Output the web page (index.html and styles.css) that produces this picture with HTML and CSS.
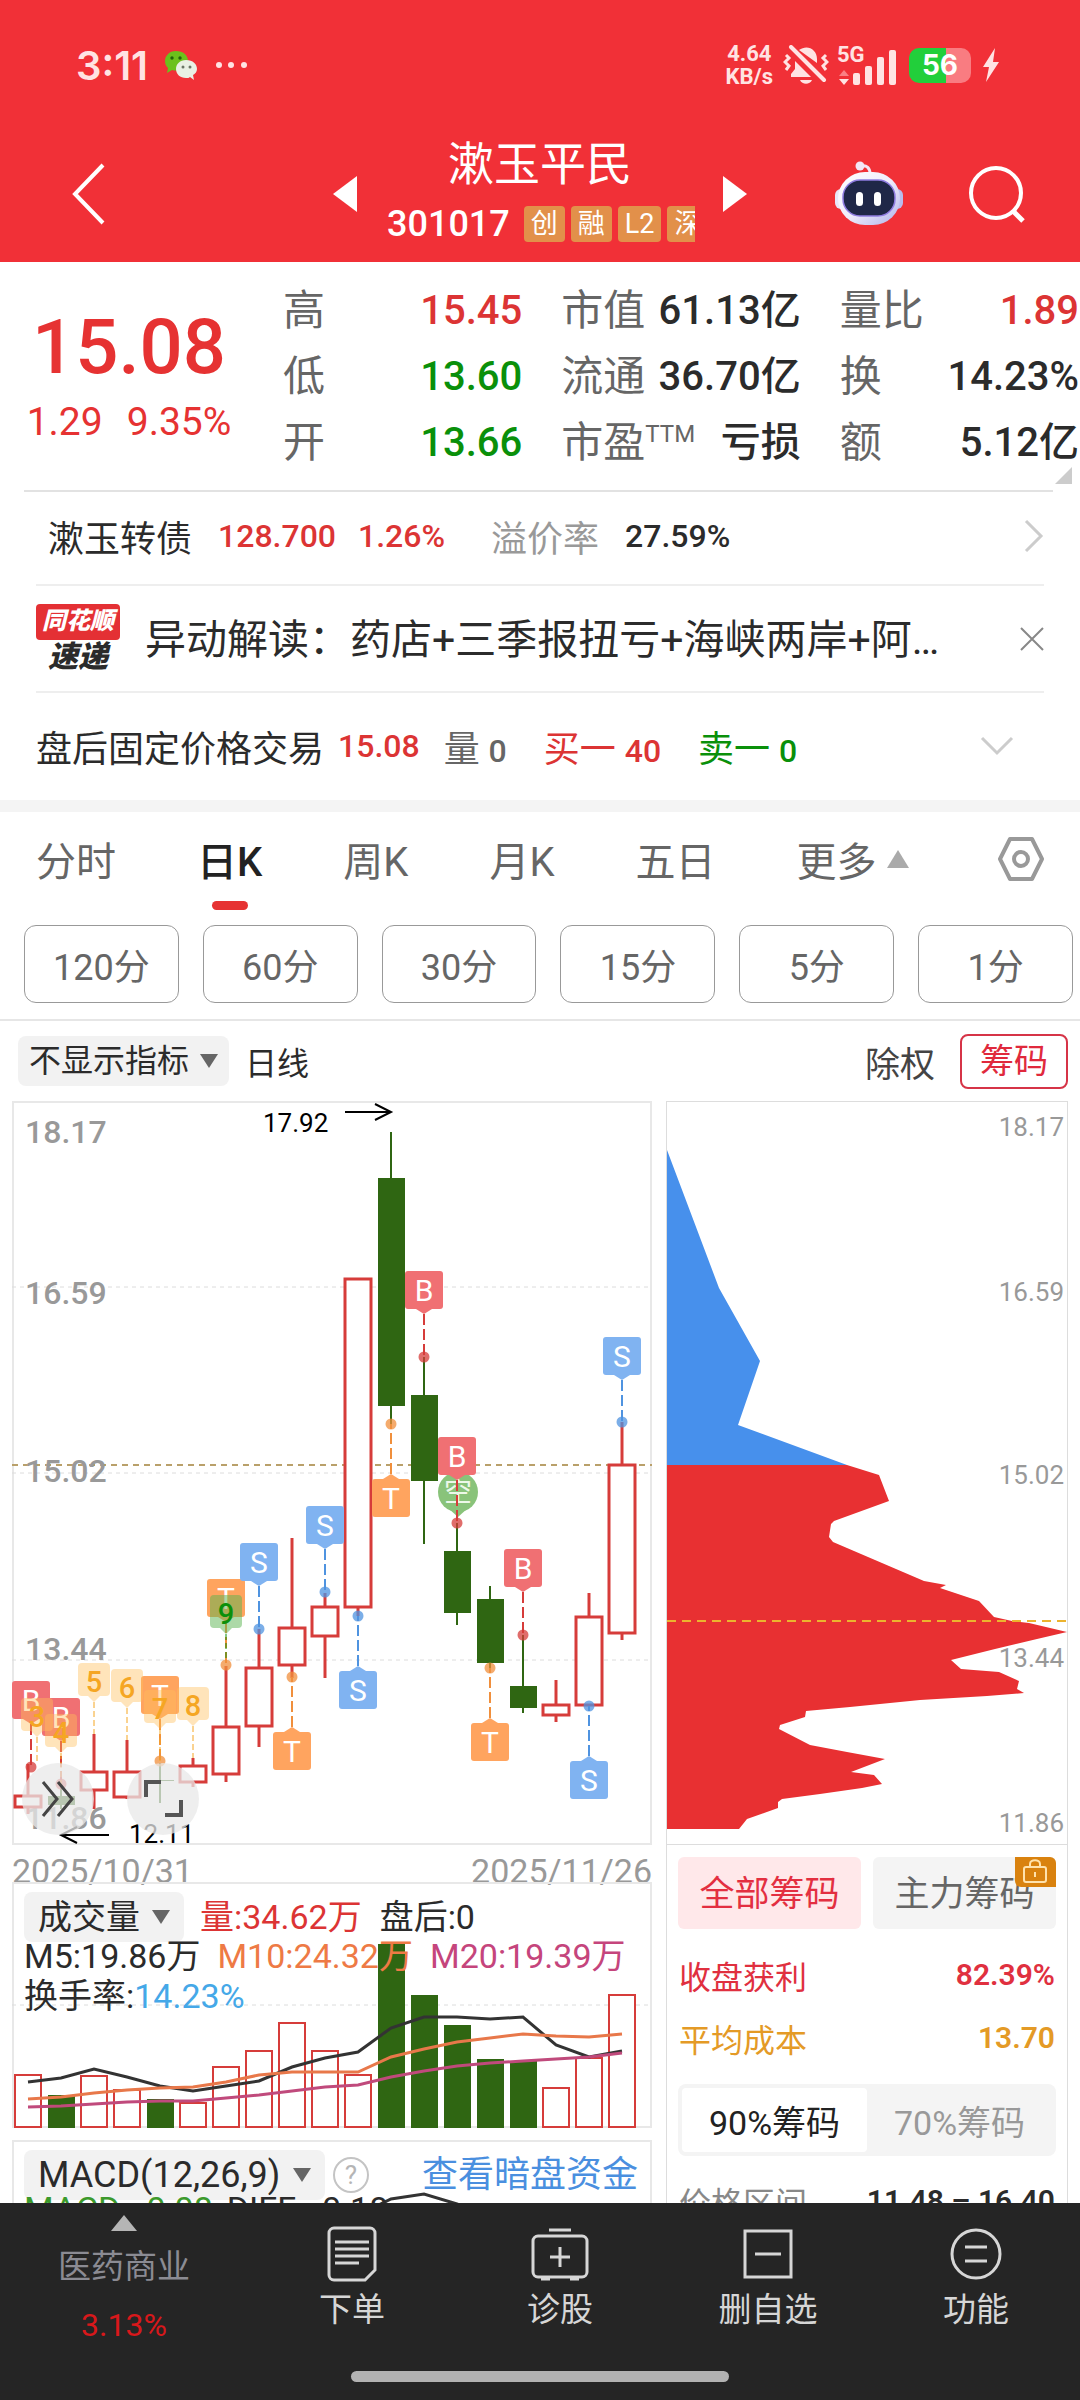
FILE: index.html
```html
<!DOCTYPE html>
<html lang="zh-CN">
<head>
  <meta charset="UTF-8">
  <meta name="viewport" content="width=device-width, initial-scale=1.0">
  <title>漱玉平民 301017</title>
  <link rel="stylesheet" href="styles.css">
</head>
<body>

  <header class="header">
    <div class="statusbar">
      <span class="time">3:11</span>
      <svg class="wechat" width="34" height="30" viewBox="0 0 34 30">
        <path fill="#6cc11c" d="M12 1C5 1 1 6 1 11c0 3 1 5 3 7l-1 5 5-3c8 2 16-2 16-9C24 5 19 1 12 1z"/>
        <circle cx="8" cy="8" r="1.7" fill="#24630c"/><circle cx="16" cy="8" r="1.7" fill="#24630c"/>
        <path fill="#e9f0e4" d="M22 10c-6 0-10 4-10 9s4 9 10 9c2 0 3 0 4-1l4 3-1-5c2-1 4-3 4-6 0-5-4-9-11-9z"/>
        <circle cx="19" cy="17" r="1.5" fill="#6b7566"/><circle cx="26" cy="17" r="1.5" fill="#6b7566"/>
      </svg>
      <svg width="32" height="8" viewBox="0 0 32 8" fill="#ffe3e3">
        <circle cx="3" cy="4" r="3"/><circle cx="15" cy="4" r="3"/><circle cx="28" cy="4" r="3"/>
      </svg>
      <span class="speed">4.64<br>KB/s</span>
      <svg width="46" height="40" viewBox="0 0 46 40">
        <path fill="#ffe3e3" d="M16 5c8-6 18-1 18 9v4zM12 16L28 32H8v-3l4-5zM17 35h12c-2 5-10 5-12 0z"/>
        <path d="M8 2l33 33" stroke="#ffe3e3" stroke-width="4" stroke-linecap="round"/>
        <path d="M3 10l3 3-4 4 4 4-3 4M43 10l-3 3 4 4-4 4 3 4" fill="none" stroke="#ffe3e3" stroke-width="3"/>
      </svg>
      <span class="signal">
        <svg width="60" height="40" viewBox="0 0 60 40" fill="#ffe3e3">
          <text x="0" y="17" font-size="22" font-weight="700">5G</text>
          <path fill="#fa8085" d="M2 31l5-6 5 6z"/><path d="M2 34h10l-5 6z"/>
          <rect x="16" y="28" width="7" height="12" rx="2"/><rect x="28" y="21" width="7" height="19" rx="2"/>
          <rect x="40" y="12" width="7" height="28" rx="2"/><rect x="52" y="5" width="7" height="35" rx="2"/>
        </svg>
      </span>
      <span class="battery">56</span>
      <svg width="18" height="34" viewBox="0 0 18 34" fill="#ffe3e3"><path d="M13 0L1 19h6L4 34 17 14h-6z"/></svg>
    </div>

    <div class="titlebar">
      <button class="icon-btn back" aria-label="返回">
        <svg width="34" height="62" viewBox="0 0 34 62" fill="none" stroke="#fff" stroke-width="4"><path d="M31 2L3 31l28 29"/></svg>
      </button>
      <button class="icon-btn" aria-label="上一只">
        <svg width="24" height="36" viewBox="0 0 24 36" fill="#fff"><path d="M24 0v36L0 18z"/></svg>
      </button>
      <div class="stock">
        <h1>漱玉平民</h1>
        <div class="code">
          <span>301017</span>
          <i>创</i><i>融</i><i>L2</i><i>深</i>
        </div>
      </div>
      <button class="icon-btn" aria-label="下一只">
        <svg width="24" height="36" viewBox="0 0 24 36" fill="#fff"><path d="M0 0v36l24-18z"/></svg>
      </button>
      <div class="actions">
        <button class="icon-btn" aria-label="智能助手">
          <svg width="70" height="66" viewBox="0 0 70 66">
            <defs>
              <linearGradient id="shell" x1="0" y1="0" x2="1" y2="1">
                <stop offset="0" stop-color="#fff"/><stop offset=".5" stop-color="#f1edfb"/><stop offset="1" stop-color="#aeb2ea"/>
              </linearGradient>
            </defs>
            <circle cx="26" cy="5" r="4.500" fill="#f3e6f6"/>
            <path d="M27 5c6-1 9 2 9 8" fill="none" stroke="#f3e6f6" stroke-width="3"/>
            <rect x="1" y="28" width="12" height="20" rx="6" fill="#e8e6f8"/><rect x="57" y="28" width="12" height="20" rx="6" fill="#b9bced"/>
            <rect x="4" y="11" width="62" height="53" rx="27" fill="url(#shell)"/>
            <rect x="9" y="19" width="52" height="36" rx="17" fill="#1f2747" stroke="#8f7ce0" stroke-width="1.500"/>
            <rect x="22" y="31" width="7" height="14" rx="3.500" fill="#fff"/><rect x="40" y="31" width="7" height="14" rx="3.500" fill="#fff"/>
          </svg>
        </button>
        <button class="icon-btn" aria-label="搜索">
          <svg width="58" height="58" viewBox="0 0 58 58" fill="none" stroke="#fff" stroke-width="4"><circle cx="28" cy="28" r="25"/><path d="M45 46l10 10" stroke-width="5"/></svg>
        </button>
      </div>
    </div>
  </header>

  <main class="main">

    <section class="quote">
      <div class="price">
        <strong>15.08</strong>
        <p><span>1.29</span><span>9.35%</span></p>
      </div>
      <dl>
        <div><dt>高</dt><dd class="up">15.45</dd></div>
        <div><dt>低</dt><dd class="down">13.60</dd></div>
        <div><dt>开</dt><dd class="down">13.66</dd></div>
      </dl>
      <dl>
        <div><dt>市值</dt><dd>61.13亿</dd></div>
        <div><dt>流通</dt><dd>36.70亿</dd></div>
        <div><dt>市盈<sup>TTM</sup></dt><dd>亏损</dd></div>
      </dl>
      <dl>
        <div><dt>量比</dt><dd class="up">1.89</dd></div>
        <div><dt>换</dt><dd>14.23%</dd></div>
        <div><dt>额</dt><dd>5.12亿</dd></div>
      </dl>
      <svg class="corner" width="17" height="17" viewBox="0 0 17 17" fill="#ccc"><path d="M17 0v17H0z"/></svg>
    </section>

    <a class="row bond" href="#bond">
      <span class="name">漱玉转债</span>
      <span class="up num">128.700</span>
      <span class="up num">1.26%</span>
      <span class="muted">溢价率</span>
      <span class="num">27.59%</span>
      <svg class="end" width="20" height="34" viewBox="0 0 20 34" fill="none" stroke="#ccc" stroke-width="3"><path d="M2 2l15 15L2 32"/></svg>
    </a>

    <div class="row news">
      <span class="logo"><b>同花顺</b><em>速递</em></span>
      <a href="#news">异动解读：药店+三季报扭亏+海峡两岸+阿里巴巴概念</a>
      <button class="icon-btn end" aria-label="关闭">
        <svg width="24" height="24" viewBox="0 0 24 24" stroke="#888" stroke-width="2"><path d="M1 1l22 22M23 1L1 23"/></svg>
      </button>
    </div>

    <div class="row after">
      <span class="name">盘后固定价格交易</span>
      <span class="up num">15.08</span>
      <span class="gray">量 <span class="num">0</span></span>
      <span class="up">买一 <span class="num">40</span></span>
      <span class="down">卖一 <span class="num">0</span></span>
      <button class="icon-btn end" aria-label="展开">
        <svg width="34" height="20" viewBox="0 0 34 20" fill="none" stroke="#ccc" stroke-width="3"><path d="M2 2l15 15L32 2"/></svg>
      </button>
    </div>

    <nav class="tabs">
      <button>分时</button>
      <button class="active">日K</button>
      <button>周K</button>
      <button>月K</button>
      <button>五日</button>
      <button>更多<svg width="22" height="18" viewBox="0 0 22 18" fill="#aaa"><path d="M11 0l11 18H0z"/></svg></button>
      <button class="end" aria-label="设置">
        <svg width="46" height="44" viewBox="0 0 46 44" fill="none" stroke="#999" stroke-width="4" stroke-linejoin="round"><path d="M12 2h22l10 20-10 20H12L2 22z"/><circle cx="23" cy="22" r="7"/></svg>
      </button>
    </nav>

    <div class="minutes">
      <button>120分</button>
      <button>60分</button>
      <button>30分</button>
      <button>15分</button>
      <button>5分</button>
      <button>1分</button>
    </div>

    <div class="toolbar">
      <label class="picker">
        <select aria-label="指标"><option>不显示指标</option></select>
        <svg width="18" height="14" viewBox="0 0 18 14" fill="#666"><path d="M0 0h18L9 14z"/></svg>
      </label>
      <span>日线</span>
      <button class="plain">除权</button>
      <button class="outlined">筹码</button>
    </div>

    <div class="charts">
      <div class="left">
        <div class="kline">
          <svg id="kline" viewBox="0 0 640 744" role="img" aria-label="日K线图"></svg>
          <button class="round expand" aria-label="展开">
            <svg width="36" height="44" viewBox="0 0 36 44" fill="none" stroke="#444" stroke-width="3"><path d="M3 5l14 17L3 39M18 5l14 17-14 17"/></svg>
          </button>
          <button class="round full" aria-label="全屏">
            <svg width="40" height="40" viewBox="0 0 40 40" fill="none" stroke="#555" stroke-width="4"><path d="M3 18V3h15M38 21v15H22"/></svg>
          </button>
        </div>
        <div class="dates"><span>2025/10/31</span><span>2025/11/26</span></div>

        <div class="volume">
          <svg id="volume" viewBox="0 0 640 246" role="img" aria-label="成交量图"></svg>
          <p>
            <label class="picker">
              <select aria-label="副图指标"><option>成交量</option></select>
              <svg width="18" height="14" viewBox="0 0 18 14" fill="#666"><path d="M0 0h18L9 14z"/></svg>
            </label>
            <span class="up">量:34.62万</span>
            <span>盘后:0</span>
          </p>
          <p class="averages"><span>M5:19.86万</span><span class="m10">M10:24.32万</span><span class="m20">M20:19.39万</span></p>
          <p class="turnover">换手率:<span>14.23%</span></p>
        </div>

        <div class="macd">
          <svg id="macd" viewBox="0 0 640 246" role="img" aria-label="MACD图"></svg>
          <p>
            <label class="picker">
              <select aria-label="MACD参数"><option>MACD(12,26,9)</option></select>
              <svg width="18" height="14" viewBox="0 0 18 14" fill="#666"><path d="M0 0h18L9 14z"/></svg>
            </label>
            <button class="help" aria-label="帮助">?</button>
            <a href="#dark">查看暗盘资金</a>
          </p>
          <p class="values"><span class="macd-value">MACD: -0.08</span> <span>DIFF: -0.18</span></p>
        </div>
      </div>

      <div class="right">
        <svg id="chips" viewBox="0 0 400 742" role="img" aria-label="筹码分布"></svg>
        <div class="chips-info">
          <div class="chips-tabs">
            <button class="active">全部筹码</button>
            <button>主力筹码
              <span class="lock">
                <svg width="24" height="24" viewBox="0 0 24 24" fill="none" stroke="#ffe2ac" stroke-width="2"><rect x="1" y="8" width="22" height="15" rx="2"/><path d="M7 8V5c0-5 10-5 10 0v3M12 13v5"/></svg>
              </span>
            </button>
          </div>
          <p class="gain"><span>收盘获利</span><b>82.39%</b></p>
          <p class="cost"><span>平均成本</span><b>13.70</b></p>
          <div class="toggle">
            <button class="active">90%筹码</button>
            <button>70%筹码</button>
          </div>
          <p class="range"><span>价格区间</span><b>11.48 – 16.40</b></p>
        </div>
      </div>
    </div>
  </main>

  <footer class="footer">
    <a class="sector" href="#sector">
      <svg width="26" height="16" viewBox="0 0 26 16" fill="#b5b5b5"><path d="M13 0l13 16H0z"/></svg>
      <span>医药商业</span>
      <b>3.13%</b>
    </a>
    <button>
      <svg width="52" height="56" viewBox="0 0 52 56" fill="none" stroke="#d6d6d6" stroke-width="3"><path d="M8 2h36a5 5 0 0 1 5 5v37L39 54H8a5 5 0 0 1-5-5V7a5 5 0 0 1 5-5zM9 16h34M9 23h34M9 30h34M9 37h24"/></svg>
      下单
    </button>
    <button>
      <svg width="60" height="56" viewBox="0 0 60 56" fill="none" stroke="#d6d6d6" stroke-width="3"><rect x="3" y="10" width="54" height="41" rx="5"/><path d="M19 4h22M11 53h9M40 53h9M30 21v20M20 31h20"/></svg>
      诊股
    </button>
    <button>
      <svg width="50" height="56" viewBox="0 0 50 56" fill="none" stroke="#d6d6d6" stroke-width="3"><rect x="2" y="5" width="46" height="46"/><path d="M12 28h26"/></svg>
      删自选
    </button>
    <button>
      <svg width="54" height="56" viewBox="0 0 54 56" fill="none" stroke="#d6d6d6" stroke-width="3"><circle cx="27" cy="28" r="24"/><path d="M16 21h22M16 35h22"/></svg>
      功能
    </button>
    <div class="homebar"></div>
  </footer>

  <script src="chart.js"></script>
</body>
</html>
```

FILE: styles.css
```css
* {
  box-sizing: border-box;
}

body {
  margin: 0;
  height: 100vh;
  display: flex;
  flex-direction: column;
  font-family: Roboto, "Noto Sans CJK SC", sans-serif;
  font-size: 36px;
  color: #2b2b2b;
  background-color: #fff;
}

button,
select {
  font: inherit;
  color: inherit;
  background: none;
  border: none;
  padding: 0;
  margin: 0;
}

a {
  color: inherit;
  text-decoration: none;
}

p, h1, dl, dd {
  margin: 0;
}

svg {
  display: block;
  flex-shrink: 0;
}

.up {
  color: #dc3434;
}

.down {
  color: #0a900a;
}

.num {
  font-size: 32px;
  font-weight: 500;
}

.muted {
  color: #999;
}

.gray {
  color: #666;
}

/* Header */
.header {
  height: 262px;
  background-color: #f13037;
  color: #fff;
}

.statusbar {
  display: flex;
  align-items: center;
  height: 130px;
  padding: 0 80px 0 76px;
}

.time {
  font-family: Inter, sans-serif;
  font-size: 40px;
  font-weight: 600;
  color: #ffe3e3;
  width: 88px;
}

.wechat {
  margin-right: 18px;
}

.speed {
  margin-left: auto;
  margin-right: 10px;
  font-size: 22px;
  font-weight: 700;
  line-height: 23px;
  text-align: center;
  color: #ffe3e3;
}

.signal {
  margin: 0 12px 0 8px;
}

.battery {
  width: 62px;
  height: 35px;
  margin-right: 11px;
  border-radius: 10px;
  background: linear-gradient(90deg, #22cf3b 60%, #f97c81 60%);
  font-family: Inter, sans-serif;
  font-size: 28px;
  font-weight: 700;
  line-height: 35px;
  text-align: center;
}

.titlebar {
  display: grid;
  grid-template-columns: 1fr 24px 366px 24px 1fr;
  align-items: center;
  height: 128px;
  padding: 0 54px;
}

.icon-btn {
  display: block;
  justify-self: start;
}

.back {
  margin-left: 18px;
}

.stock {
  text-align: center;
  padding-left: 30px;
}

.stock h1 {
  font-size: 46px;
  font-weight: 400;
  line-height: 56px;
  padding-right: 30px;
}

.code {
  display: flex;
  gap: 6px;
  overflow: hidden;
  width: 308px;
  margin-top: 14px;
  margin-bottom: 10px;
  line-height: 36px;
  font-weight: 500;
}

.code span {
  margin-right: 8px;
}

.code i {
  flex-shrink: 0;
  padding: 0 7px;
  border-radius: 4px;
  background-color: #e2904a;
  font-size: 27px;
  font-style: normal;
  font-weight: 400;
}

.actions {
  display: flex;
  align-items: center;
  justify-content: flex-end;
  gap: 64px;
}

/* Main */
.main {
  flex: 1;
  min-height: 0;
  overflow: hidden;
  display: flex;
  flex-direction: column;
}

.main > * {
  flex-shrink: 0;
}

.quote {
  position: relative;
  display: grid;
  grid-template-columns: 220px 1fr 1fr 1fr;
  column-gap: 39px;
  height: 230px;
  margin-left: 24px;
  padding: 16px 1px 0 0;
}

.quote::after {
  content: "";
  position: absolute;
  left: 0;
  right: 27px;
  bottom: 0;
  height: 2px;
  background-color: #e2e2e2;
}

.price {
  color: #e63232;
  text-align: center;
  padding-top: 24px;
  padding-right: 10px;
}

.price strong {
  display: block;
  font-size: 76px;
  font-weight: 500;
  line-height: 90px;
}

.price p {
  display: flex;
  justify-content: center;
  gap: 24px;
  font-size: 39px;
  line-height: 60px;
}

.quote dl > div {
  display: flex;
  justify-content: space-between;
  height: 66px;
  line-height: 66px;
  font-size: 42px;
  white-space: nowrap;
}

.quote dt {
  color: #666;
}

.quote dt sup {
  font-size: 24px;
  line-height: 24px;
}

.quote dd {
  font-size: 40px;
  font-weight: 500;
}

.corner {
  position: absolute;
  right: 8px;
  bottom: 8px;
}

.row {
  display: flex;
  align-items: center;
  margin: 0 36px;
  white-space: nowrap;
}

.end {
  margin-left: auto;
}

.bond {
  height: 94px;
  padding-left: 12px;
  padding-bottom: 5px;
  border-bottom: 2px solid #eee;
}

.bond .name {
  margin-right: 26px;
}

.bond .num {
  margin-right: 22px;
}

.bond .muted {
  margin-left: 24px;
  margin-right: 26px;
}

.news {
  height: 107px;
  border-bottom: 2px solid #eee;
}

.news a {
  flex: 1;
  margin-left: 25px;
  margin-right: 60px;
  padding-bottom: 5px;
  font-size: 41px;
  overflow: hidden;
  text-overflow: ellipsis;
}

.logo {
  width: 84px;
  text-align: center;
  font-weight: 900;
}

.logo b {
  display: block;
  height: 36px;
  line-height: 34px;
  border-radius: 4px;
  background-color: #e43034;
  color: #fff;
  font-size: 24px;
  font-weight: 900;
  font-style: italic;
}

.logo em {
  display: block;
  font-size: 30px;
  line-height: 34px;
}

.after {
  height: 107px;
  padding-right: 30px;
  padding-bottom: 2px;
}

.after > span {
  margin-right: 37px;
}

.after .name {
  margin-right: 14px;
}

.after > .num {
  margin-right: 24px;
}

.tabs {
  display: flex;
  align-items: center;
  gap: 81px;
  height: 113px;
  padding: 12px 36px 0;
  border-top: 12px solid #f4f4f4;
  font-size: 40px;
  color: #666;
}

.tabs button {
  position: relative;
  display: flex;
  align-items: center;
  gap: 10px;
  height: 90px;
  padding-bottom: 20px;
}

.tabs .active {
  color: #222;
  font-weight: 500;
}

.tabs .active::after {
  content: "";
  position: absolute;
  left: 50%;
  bottom: 4px;
  width: 36px;
  height: 9px;
  margin-left: -18px;
  border-radius: 5px;
  background-color: #e63232;
}

.minutes {
  display: grid;
  grid-template-columns: repeat(6, 1fr);
  gap: 24px;
  padding: 12px 7px 16px 24px;
  border-bottom: 2px solid #e6e6e6;
}

.minutes button {
  height: 78px;
  border: 1px solid #999;
  border-radius: 12px;
  color: #666;
}

.toolbar {
  display: flex;
  align-items: center;
  height: 80px;
  padding: 0 12px 0 18px;
  font-size: 32px;
}

.picker {
  display: flex;
  align-items: center;
  gap: 10px;
  height: 50px;
  padding: 0 11px;
  margin-right: 16px;
  border-radius: 8px;
  background-color: #f2f2f2;
}

.picker select {
  appearance: none;
}

.plain {
  margin-left: auto;
  margin-right: 25px;
  font-size: 35px;
  color: #444;
}

.outlined {
  width: 108px;
  height: 55px;
  border: 2px solid #d63447;
  border-radius: 8px;
  font-size: 34px;
  line-height: 50px;
  color: #e0293c;
}

/* Charts */
.charts {
  flex: 1;
  min-height: 0;
  display: grid;
  grid-template-columns: 640fr 402fr;
  gap: 14px;
  padding: 0 12px;
}

.charts svg text {
  font-family: Roboto, "Noto Sans CJK SC", sans-serif;
}

.kline {
  position: relative;
}

.kline > svg,
.right > svg {
  width: 100%;
}

.round {
  position: absolute;
  bottom: 10px;
  width: 72px;
  height: 72px;
  border-radius: 50%;
  background-color: rgba(232, 232, 232, 0.75);
  display: flex;
  align-items: center;
  justify-content: center;
}

.expand {
  left: 10px;
}

.full {
  left: 115px;
}

.dates {
  display: flex;
  justify-content: space-between;
  height: 37px;
  padding-top: 8px;
  font-size: 34px;
  line-height: 37px;
  color: #999;
}

.volume,
.macd {
  position: relative;
  font-size: 34px;
  white-space: nowrap;
}

.volume {
  height: 246px;
  padding: 11px 12px;
  margin-bottom: 12px;
}

.volume > svg,
.macd > svg {
  position: absolute;
  left: 0;
  top: 0;
  width: 100%;
}

.volume p,
.macd p {
  position: relative;
  display: flex;
  align-items: center;
  height: 48px;
  line-height: 40px;
}

.volume .picker,
.macd .picker {
  gap: 12px;
  padding: 0 14px;
}

.volume .up {
  margin-right: 18px;
}

.volume .averages {
  gap: 17px;
  height: 40px;
  margin-top: -5px;
}

.volume .turnover {
  height: 40px;
}

.averages .m10 {
  color: #ee7a45;
}

.averages .m20 {
  color: #c5457c;
}

.turnover span {
  color: #45a8e8;
}

.macd {
  height: 246px;
  padding: 11px 14px 0 12px;
}

.macd p {
  font-size: 36px;
}

.help {
  width: 36px;
  height: 36px;
  margin-left: -8px;
  border: 2px solid #c4c4c4;
  border-radius: 50%;
  font-size: 26px;
  line-height: 30px;
  color: #b5b5b5;
}

.macd a {
  margin-left: auto;
  color: #4a8fdf;
}

.macd .values {
  gap: 14px;
  height: 40px;
  margin-top: -10px;
  font-size: 34px;
}

.macd-value {
  color: #3c9a2c;
}

.right {
  border: 1px solid #ddd;
}

.chips-info {
  border-top: 1px solid #ddd;
  padding: 12px 11px;
}

.chips-tabs {
  display: grid;
  grid-template-columns: 1fr 1fr;
  gap: 12px;
  margin-bottom: 14px;
}

.chips-tabs button {
  position: relative;
  height: 72px;
  padding-bottom: 6px;
  border-radius: 6px;
  background-color: #f4f4f4;
  font-size: 35px;
  color: #666;
}

.chips-tabs .active {
  background-color: #ffe8ea;
  color: #e32f41;
}

.lock {
  position: absolute;
  top: 0;
  right: 0;
  width: 41px;
  height: 30px;
  padding: 2px 8px;
  border-radius: 0 6px 0 6px;
  background-color: #d9820f;
}

.chips-info p {
  display: flex;
  justify-content: space-between;
  align-items: center;
  height: 63px;
  padding: 0 1px;
  font-size: 32px;
}

.chips-info b {
  font-size: 30px;
  font-weight: 600;
}

.gain {
  color: #e0303f;
}

.cost {
  color: #e49a26;
}

.toggle {
  display: grid;
  grid-template-columns: 1fr 1fr;
  height: 72px;
  margin: 15px 0;
  padding: 4px;
  border-radius: 8px;
  background-color: #f4f4f4;
  font-size: 34px;
  color: #999;
}

.toggle .active {
  border-radius: 4px;
  background-color: #fff;
  color: #222;
}

.chips-info .range {
  margin-top: -2px;
}

.range span {
  color: #888;
}

/* Footer */
.footer {
  position: relative;
  display: grid;
  grid-template-columns: 248fr 208fr 208fr 208fr 208fr;
  height: 197px;
  background-color: #252525;
  color: #d6d6d6;
  font-size: 33px;
}

.footer button {
  display: flex;
  flex-direction: column;
  align-items: center;
  gap: 4px;
  padding-top: 23px;
  line-height: 48px;
}

.sector {
  display: flex;
  flex-direction: column;
  align-items: center;
  padding-top: 12px;
  color: #8b8b93;
}

.sector span {
  line-height: 48px;
  margin-top: 12px;
}

.sector b {
  margin-top: 10px;
  font-size: 32px;
  font-weight: 400;
  line-height: 48px;
  color: #d8181b;
}

.homebar {
  position: absolute;
  left: 50%;
  bottom: 18px;
  width: 378px;
  height: 11px;
  margin-left: -189px;
  border-radius: 6px;
  background-color: #b2b2b2;
}
```

FILE: chart.js
```js
const RED = '#d63c3a';
const GREEN = '#2f6612';
const STEP = 33;
const cx = i => 16 + i * STEP;

const line = (x1, y1, x2, y2, color, width, dash) =>
  `<line x1="${x1}" y1="${y1}" x2="${x2}" y2="${y2}" stroke="${color}" stroke-width="${width}"${dash ? ` stroke-dasharray="${dash}"` : ''}/>`;
const label = (x, y, text, size, color, extra = '') =>
  `<text x="${x}" y="${y}" font-size="${size}" fill="${color}" ${extra}>${text}</text>`;
const frame = h => `<rect x="1" y="1" width="638" height="${h - 2}" fill="none" stroke="#e8e8e8" stroke-width="2"/>`;

// rising, high, body top, body bottom, low
const candles = [
  [1, 663, 695, 706, 713], [0, 683, 695, 704, 708], [1, 633, 671, 689, 708],
  [1, 639, 671, 696, 698], [0, 662, 679, 680, 702], [1, 657, 665, 681, 686],
  [1, 565, 626, 673, 681], [1, 528, 567, 625, 646], [1, 437, 527, 564, 577],
  [1, 492, 506, 535, 577], [1, 178, 178, 506, 515], [0, 31, 77, 305, 323],
  [0, 256, 294, 380, 443], [0, 422, 450, 512, 524], [0, 485, 498, 562, 567],
  [0, 534, 585, 607, 612], [1, 579, 604, 614, 621], [1, 492, 516, 604, 605],
  [1, 321, 364, 532, 539]
];

const markerColors = { B: ['#f07073', '#d63c3a'], S: ['#80b3f1', '#4f93e0'], T: ['#ffa45f', '#f08f3c'] };
// letter, x, box top, dot
const markers = [
  ['B', 19, 580, 666], ['B', 49, 597, 683], ['T', 148, 575, 660], ['T', 214, 478, 564],
  ['S', 247, 442, 528], ['T', 280, 631, 576], ['S', 313, 405, 491], ['S', 346, 570, 515],
  ['T', 379, 378, 323], ['B', 412, 170, 256], ['B', 445, 336, 422], ['T', 478, 622, 567],
  ['B', 511, 448, 534], ['S', 577, 660, 605], ['S', 610, 236, 321]
];

// number, x, top, stem end
const counts = [
  [3, 25, 597, 660], [4, 49, 613, 683], [5, 82, 562, 633], [6, 115, 568, 639],
  [7, 148, 589, 660], [8, 181, 586, 657]
];

function tag(n, x, y, end, fill, color) {
  return `<path d="M${x - 12} ${y}h24q4 0 4 4v25q0 4-4 4h-6l-6 6-6-6h-6q-4 0-4-4V${y + 4}q0-4 4-4z" fill="${fill}"/>` +
    line(x, y + 39, x, end, color, 1, '6 3') +
    label(x, y + 29, n, 29, color, 'text-anchor="middle" font-weight="500"');
}

function drawKline() {
  let s = frame(744);
  [186, 372, 559].forEach(y => s += line(0, y, 640, y, '#dcdcdc', 1, '4 4'));
  s += line(0, 364, 640, 364, '#b9a06a', 2, '6 5');
  [['18.17', 42], ['16.59', 203], ['15.02', 381], ['13.44', 559], ['11.86', 728]]
    .forEach(([t, y]) => s += label(13, y, t, 32, '#999', 'font-weight="500"'));

  candles.forEach(([up, high, top, bottom, low], i) => {
    const x = cx(i);
    const color = up ? RED : GREEN;
    s += line(x, high, x, top, color, up ? 3 : 2) + line(x, bottom, x, low, color, up ? 3 : 2);
    s += up
      ? `<rect x="${x - 13}" y="${top}" width="26" height="${bottom - top}" fill="#fff" stroke="${RED}" stroke-width="3"/>`
      : `<rect x="${x - 13}" y="${top}" width="27" height="${bottom - top}" fill="${GREEN}"/>`;
  });

  s += `<g opacity=".8"><circle cx="446" cy="391" r="20" fill="#6cb55a"/><path d="M436 407h20l-10 9z" fill="#6cb55a"/>` +
    label(446, 401, '空', 28, '#e9f7e4', 'text-anchor="middle"') + '</g>';

  markers.forEach(([letter, x, top, dot]) => {
    const [fill, stroke] = markerColors[letter];
    const above = top < dot;
    const edge = above ? top + 38 : top;
    const tip = above ? edge + 5 : edge - 5;
    s += line(x, tip, x, dot, stroke, 2, '11 4');
    s += `<circle cx="${x}" cy="${dot}" r="5.500" fill="${stroke}" opacity=".75"/>`;
    s += `<rect x="${x - 19}" y="${top}" width="38" height="38" rx="3" fill="${fill}"/>`;
    s += `<path d="M${x - 8} ${edge}h16L${x} ${tip}z" fill="${fill}"/>`;
    s += label(x, top + 30, letter, 30, '#fff', 'text-anchor="middle"');
  });
  counts.forEach(([n, x, y, end]) => s += tag(n, x, y, end, 'rgba(255,190,90,.42)', '#f5a623'));
  s += tag(9, 214, 494, 560, 'rgba(90,180,80,.5)', '#0a900a');

  s += label(251, 31, '17.92', 26, '#000') + label(117, 742, '12.11', 26, '#000');
  s += '<path d="M333 11h46M363 3l16 8-16 8M97 734H49M65 726l-16 8 16 8" fill="none" stroke="#000" stroke-width="2"/>';
  document.getElementById('kline').innerHTML = s;
}

// rising, bar top
const volumes = [
  [1, 192], [0, 213], [1, 193], [1, 207], [0, 217], [1, 220], [1, 184], [1, 168], [1, 140], [1, 168],
  [1, 192], [0, 62], [0, 113], [0, 143], [0, 177], [0, 179], [1, 205], [1, 175], [1, 112]
];
const averages = [
  ['#333', [200, 196, 187, 195, 204, 209, 204, 199, 185, 176, 170, 146, 135, 135, 137, 135, 163, 175, 169]],
  ['#e8784a', [217, 215, 211, 208, 206, 205, 200, 193, 190, 190, 190, 175, 167, 160, 156, 152, 154, 155, 152]],
  ['#c04a7c', [225, 224, 222, 220, 219, 219, 216, 213, 209, 205, 203, 195, 189, 184, 181, 179, 177, 175, 171]]
];

function drawVolume() {
  let s = frame(246) + line(0, 123, 640, 123, '#dcdcdc', 1, '4 4');
  volumes.forEach(([up, y], i) => {
    const x = cx(i) - 13;
    s += up
      ? `<rect x="${x}" y="${y + 1}" width="26" height="${244 - y}" fill="#fff" stroke="${RED}" stroke-width="2"/>`
      : `<rect x="${x}" y="${y}" width="27" height="${246 - y}" fill="${GREEN}"/>`;
  });
  averages.forEach(([color, ys]) => {
    s += `<polyline points="${ys.map((y, i) => cx(i) + ',' + y).join(' ')}" fill="none" stroke="${color}" stroke-width="3"/>`;
  });
  document.getElementById('volume').innerHTML = s;
}

function drawMacd() {
  document.getElementById('macd').innerHTML = frame(246) +
    '<polyline points="346,75 379,59 412,54 445,64 478,75" fill="none" stroke="#333" stroke-width="3"/>';
}

function drawChips() {
  const blue = '0,48 52,186 93,259 71,323 180,363 0,363';
  const red = '0,363 180,363 212,373 222,399 167,419 164,422 162,435 166,440 257,479 279,483 273,486 312,499 327,515 ' +
    '345,519 362,521 400,530 370,537 328,547 284,558 294,567 332,570 352,579 350,587 357,591 320,594 253,598 183,605 ' +
    '139,609 138,615 113,623 112,627 143,643 180,650 218,657 184,670 207,673 215,682 195,686 153,692 115,697 111,700 ' +
    '111,706 80,717 72,727 0,727';
  let s = `<polygon points="${blue}" fill="#4790ec"/><polygon points="${red}" fill="#e83032"/>`;
  s += line(0, 519, 400, 519, '#ecb32e', 2, '9 6');
  [['18.17', 34], ['16.59', 199], ['15.02', 382], ['13.44', 565], ['11.86', 730]]
    .forEach(([t, y]) => s += label(397, y, t, 26, '#999', 'text-anchor="end"'));
  document.getElementById('chips').innerHTML = s;
}

drawKline();
drawVolume();
drawMacd();
drawChips();
```
